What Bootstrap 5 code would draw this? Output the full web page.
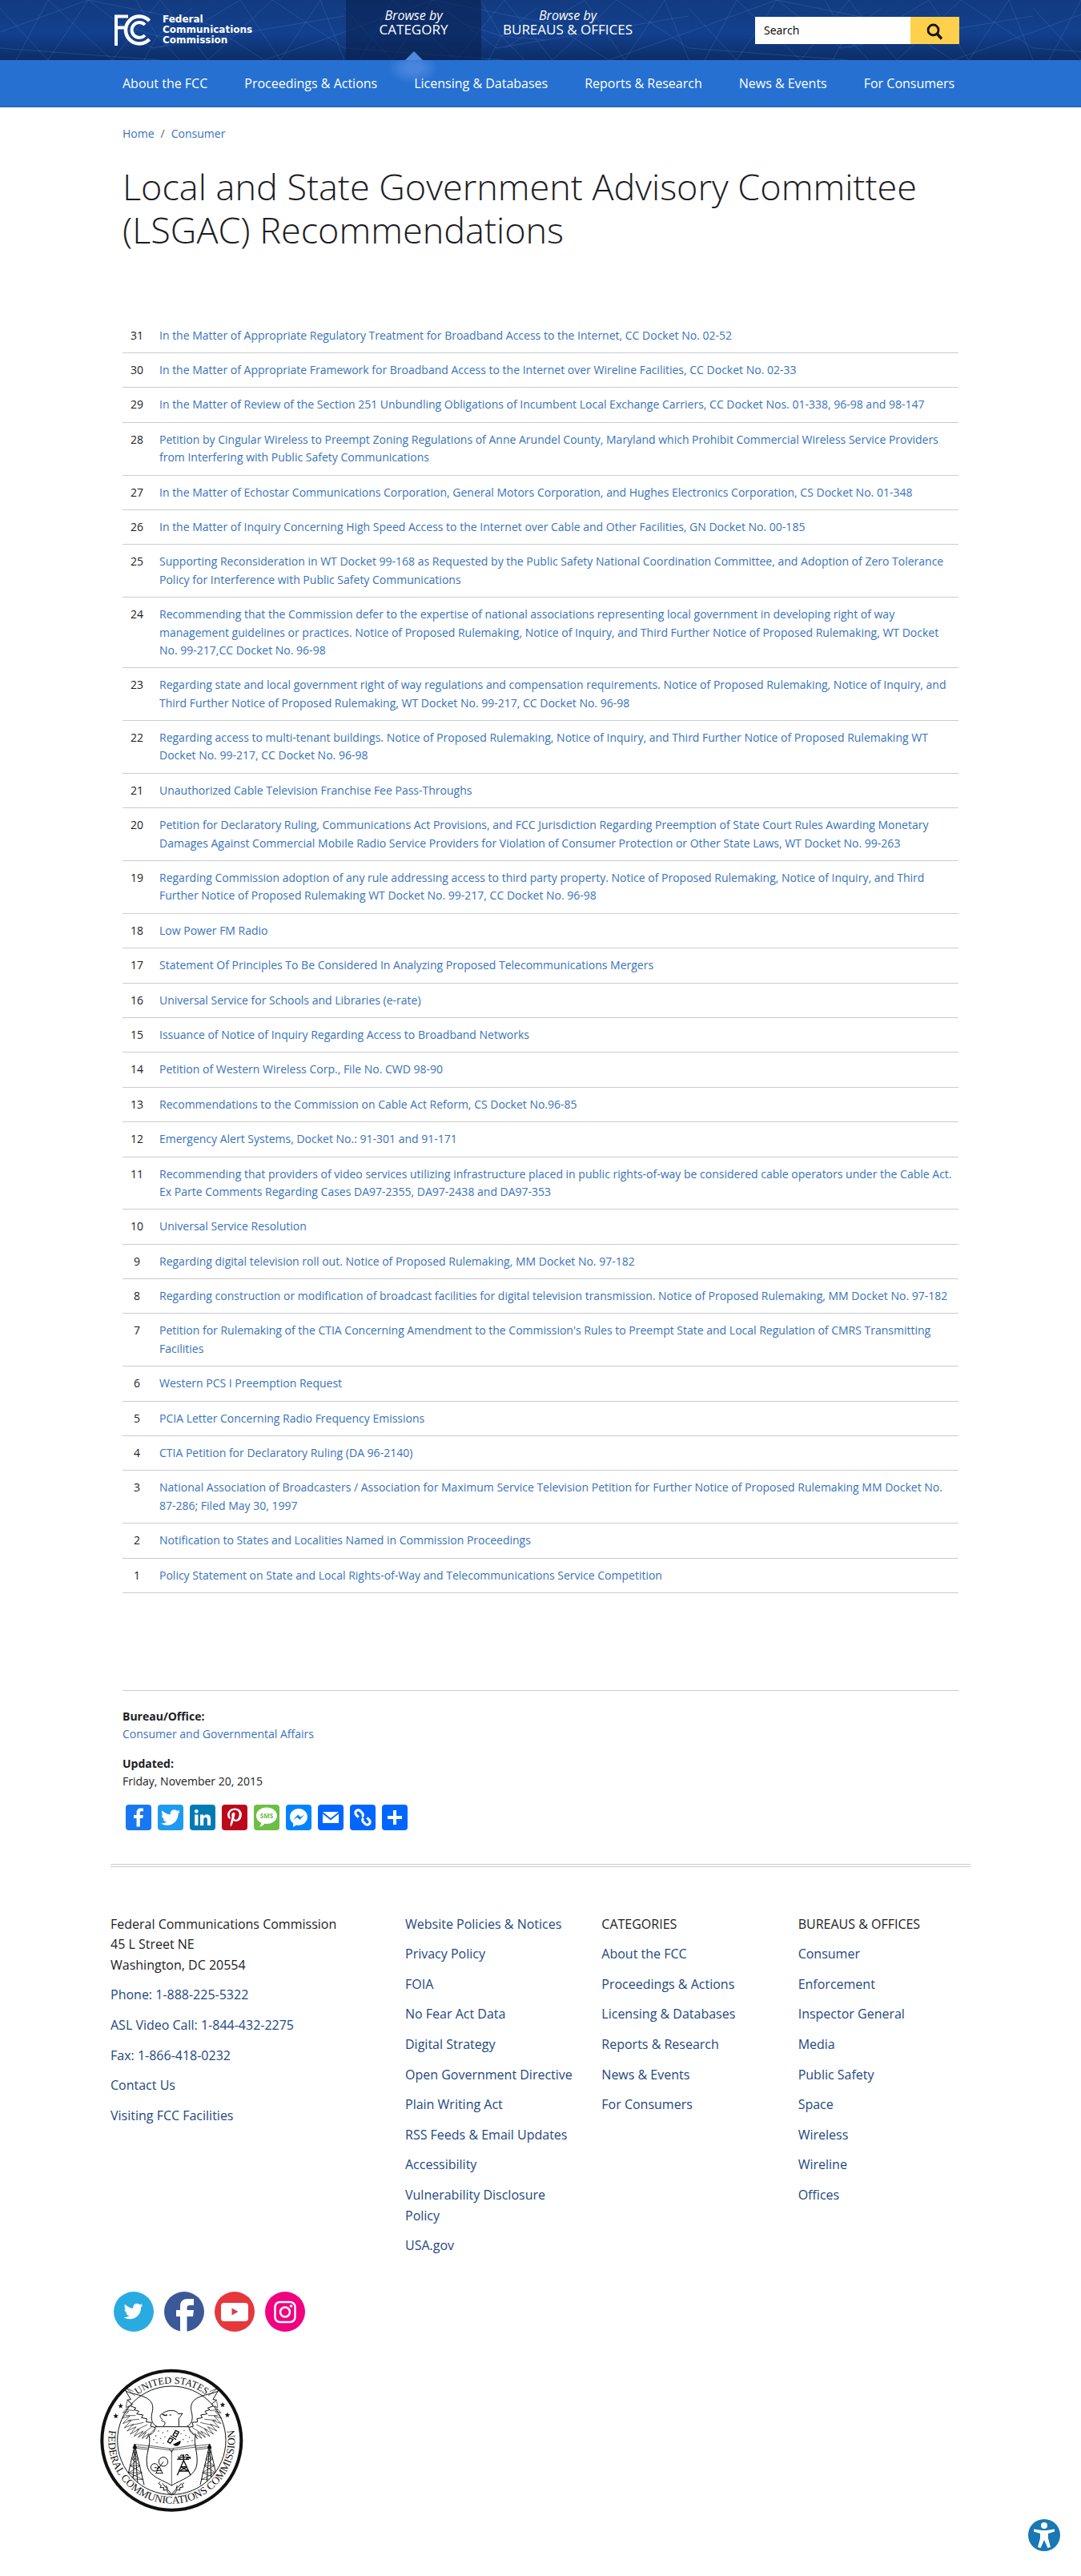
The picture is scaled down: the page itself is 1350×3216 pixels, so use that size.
<!DOCTYPE html>
<html lang="en">
<head>
<meta charset="utf-8">
<meta name="viewport" content="width=device-width, initial-scale=1">
<title>Local and State Government Advisory Committee (LSGAC) Recommendations | Federal Communications Commission</title>
<link href="https://cdn.jsdelivr.net/npm/bootstrap@5.3.0/dist/css/bootstrap.min.css" rel="stylesheet">
<style>
body{font-family:"Open Sans",sans-serif;font-size:16px;line-height:1.6;color:#1c1c24;background:#fff}
a{color:#3873ba;text-decoration:none}
a:hover{text-decoration:underline}
.wrap{max-width:1104px;padding-left:15px;padding-right:15px}
.wrap-in{padding-left:30px;padding-right:30px}
.fs-text{font-size:14px}

.masthead{background:linear-gradient(#123b80,#13408d 55%,#0d2d66);overflow:hidden}
.masthead .net{position:absolute;inset:0;width:100%;height:100%}
.masthead .wrap{min-height:75px}
.logo{width:294px;padding-left:5px;color:#fff}
.logo:hover{text-decoration:none}
.logo-name{font:bold 12px/13px "DejaVu Sans",sans-serif;margin-left:14px}
.browse{border:0;background:none;color:#fff;padding:11px 27px 0;line-height:17px;font-size:17px;text-align:center}
.browse i{display:block;font-size:16px}
.browse.on{width:169px;padding-left:0;padding-right:0;background:rgba(10,33,80,.6);position:relative}
.browse.on::after{content:"";position:absolute;left:50%;bottom:0;margin-left:-11px;border:11px solid transparent;border-top:0;border-bottom-color:#5089de}
.search{width:255px;margin-right:14px}
.search .form-control{height:34px;border:0;border-radius:0;font-size:14px;padding:0 11px;color:#000}
.search .form-control::placeholder{color:#000;opacity:1}
.search .btn{width:61px;flex:none;border:0;border-radius:0;background:#ffd04b;padding:0}

.mainnav{background:radial-gradient(ellipse 32px 20px at 516px 10px,#4785de 30%,rgba(71,133,222,0)) #2670d2;border-bottom:2px solid #2865bd}
.mainnav .nav{gap:0 46px;padding-top:17px;padding-bottom:14px}
.mainnav a{color:#fff;padding:0}

.crumbs{padding-top:21px}
.crumbs .breadcrumb{--bs-breadcrumb-item-padding-x:8px;line-height:24px}
h1{font-size:45px;font-weight:300;line-height:54px;margin:27px 0 84px}
.recs{--bs-table-bg:transparent;font-size:14px;margin-bottom:121px;color:inherit}
.recs td{padding:10px 3px 10px 10px;border-bottom:1px solid #ccc;color:inherit}
.recs td:first-child{width:36px;padding-left:0;padding-right:0;text-align:center}
.meta{border-top:1px solid #ccc;padding-top:21px}
.share{gap:8px;padding:17px 4px 42px}
.share a,.follow a,.share svg,.follow svg{display:block}
.share svg{width:32px;height:32px;border-radius:4px}
.updated{margin-top:14px}
.twin{border-top:1px solid #ccc;border-bottom:1px solid #ccc;height:4px;opacity:1;margin:0 0 59px;background:none;color:inherit}
footer a{color:#1d4880}
footer li{margin-bottom:12px}
.follow{gap:13px;padding:32px 4px 0}
.seal{display:block;width:182px;height:182px;margin:44px 0 79px -14px}
.a11y{position:fixed;right:26px;bottom:31px;width:40px;height:40px;border:0;padding:0;background:none}
.a11y svg{display:block}
</style>
</head>
<body>

<header class="masthead position-relative">
  <svg class="net" aria-hidden="true">
    <defs>
      <pattern id="mesh" width="430" height="75" patternUnits="userSpaceOnUse">
        <g stroke="#5f93d8" stroke-opacity=".22" fill="none" stroke-width="1">
          <path d="M0 10 60 75M0 40 110 0M20 75 60 0M60 0 140 75M60 75 110 0M110 0 190 60M140 75 200 0M110 0 260 30M200 0 260 75M200 60 300 0M190 60 430 20M260 30 330 75M260 75 340 0M300 0 350 75M340 0 430 60M350 75 400 0M400 0 430 75M0 60 200 75M330 75 430 40"/>
          <path d="M196 45 170 0M196 45 150 30M196 45 225 75M196 45 250 50M196 45 240 10M196 45 180 75"/>
        </g>
      </pattern>
    </defs>
    <rect width="100%" height="100%" fill="url(#mesh)"/>
  </svg>
  <div class="container-fluid wrap d-flex position-relative">
    <a class="logo d-flex align-items-center" href="#">
      <svg width="46" height="39" viewBox="0 0 46 39" fill="none" stroke="#fff" aria-hidden="true">
        <path d="M2 39V2.500H17M2 16.500H12" stroke-width="4"/>
        <path d="M43.500 8A17 17 0 1 0 43.500 31" stroke-width="4.500"/>
        <path d="M38 13A9.500 9.500 0 1 0 38 26" stroke-width="4"/>
      </svg>
      <span class="logo-name">Federal<br>Communications<br>Commission</span>
    </a>
    <button class="browse on d-flex flex-column align-items-center" type="button"><i>Browse by</i>CATEGORY</button>
    <button class="browse d-flex flex-column align-items-center" type="button"><i>Browse by</i>BUREAUS &amp; OFFICES</button>
    <form class="search input-group flex-nowrap align-self-center ms-auto" role="search" onsubmit="return false">
      <input class="form-control" type="search" placeholder="Search" aria-label="Search">
      <button class="btn" type="submit" aria-label="Submit search">
        <svg width="21" height="21" viewBox="0 0 21 21" fill="none" stroke="#141414" aria-hidden="true"><circle cx="8.500" cy="8.500" r="6.500" stroke-width="2.800"/><path d="m13 13 6 6.500" stroke-width="3.400"/></svg>
      </button>
    </form>
  </div>
</header>

<nav class="mainnav" aria-label="Main">
  <div class="container-fluid wrap wrap-in">
    <div class="nav">
      <a class="nav-link" href="#">About the FCC</a>
      <a class="nav-link" href="#">Proceedings &amp; Actions</a>
      <a class="nav-link" href="#">Licensing &amp; Databases</a>
      <a class="nav-link" href="#">Reports &amp; Research</a>
      <a class="nav-link" href="#">News &amp; Events</a>
      <a class="nav-link" href="#">For Consumers</a>
    </div>
  </div>
</nav>

<main class="container-fluid wrap wrap-in">
  <nav class="crumbs" aria-label="Breadcrumb">
    <ol class="breadcrumb fs-text mb-0">
      <li class="breadcrumb-item"><a href="#">Home</a></li>
      <li class="breadcrumb-item"><a href="#">Consumer</a></li>
    </ol>
  </nav>
  <h1>Local and State Government Advisory Committee (LSGAC) Recommendations</h1>

  <table class="table recs">
    <tbody>
      <tr><td>31</td><td><a href="#">In the Matter of Appropriate Regulatory Treatment for Broadband Access to the Internet, CC Docket No. 02-52</a></td></tr>
      <tr><td>30</td><td><a href="#">In the Matter of Appropriate Framework for Broadband Access to the Internet over Wireline Facilities, CC Docket No. 02-33</a></td></tr>
      <tr><td>29</td><td><a href="#">In the Matter of Review of the Section 251 Unbundling Obligations of Incumbent Local Exchange Carriers, CC Docket Nos. 01-338, 96-98 and 98-147</a></td></tr>
      <tr><td>28</td><td><a href="#">Petition by Cingular Wireless to Preempt Zoning Regulations of Anne Arundel County, Maryland which Prohibit Commercial Wireless Service Providers from Interfering with Public Safety Communications</a></td></tr>
      <tr><td>27</td><td><a href="#">In the Matter of Echostar Communications Corporation, General Motors Corporation, and Hughes Electronics Corporation, CS Docket No. 01-348</a></td></tr>
      <tr><td>26</td><td><a href="#">In the Matter of Inquiry Concerning High Speed Access to the Internet over Cable and Other Facilities, GN Docket No. 00-185</a></td></tr>
      <tr><td>25</td><td><a href="#">Supporting Reconsideration in WT Docket 99-168 as Requested by the Public Safety National Coordination Committee, and Adoption of Zero Tolerance Policy for Interference with Public Safety Communications</a></td></tr>
      <tr><td>24</td><td><a href="#">Recommending that the Commission defer to the expertise of national associations representing local government in developing right of way management guidelines or practices. Notice of Proposed Rulemaking, Notice of Inquiry, and Third Further Notice of Proposed Rulemaking, WT Docket No. 99-217,CC Docket No. 96-98</a></td></tr>
      <tr><td>23</td><td><a href="#">Regarding state and local government right of way regulations and compensation requirements. Notice of Proposed Rulemaking, Notice of Inquiry, and Third Further Notice of Proposed Rulemaking, WT Docket No. 99-217, CC Docket No. 96-98</a></td></tr>
      <tr><td>22</td><td><a href="#">Regarding access to multi-tenant buildings. Notice of Proposed Rulemaking, Notice of Inquiry, and Third Further Notice of Proposed Rulemaking WT Docket No. 99-217, CC Docket No. 96-98</a></td></tr>
      <tr><td>21</td><td><a href="#">Unauthorized Cable Television Franchise Fee Pass-Throughs</a></td></tr>
      <tr><td>20</td><td><a href="#">Petition for Declaratory Ruling, Communications Act Provisions, and FCC Jurisdiction Regarding Preemption of State Court Rules Awarding Monetary Damages Against Commercial Mobile Radio Service Providers for Violation of Consumer Protection or Other State Laws, WT Docket No. 99-263</a></td></tr>
      <tr><td>19</td><td><a href="#">Regarding Commission adoption of any rule addressing access to third party property. Notice of Proposed Rulemaking, Notice of Inquiry, and Third Further Notice of Proposed Rulemaking WT Docket No. 99-217, CC Docket No. 96-98</a></td></tr>
      <tr><td>18</td><td><a href="#">Low Power FM Radio</a></td></tr>
      <tr><td>17</td><td><a href="#">Statement Of Principles To Be Considered In Analyzing Proposed Telecommunications Mergers</a></td></tr>
      <tr><td>16</td><td><a href="#">Universal Service for Schools and Libraries (e-rate)</a></td></tr>
      <tr><td>15</td><td><a href="#">Issuance of Notice of Inquiry Regarding Access to Broadband Networks</a></td></tr>
      <tr><td>14</td><td><a href="#">Petition of Western Wireless Corp., File No. CWD 98-90</a></td></tr>
      <tr><td>13</td><td><a href="#">Recommendations to the Commission on Cable Act Reform, CS Docket No.96-85</a></td></tr>
      <tr><td>12</td><td><a href="#">Emergency Alert Systems, Docket No.: 91-301 and 91-171</a></td></tr>
      <tr><td>11</td><td><a href="#">Recommending that providers of video services utilizing infrastructure placed in public rights-of-way be considered cable operators under the Cable Act. Ex Parte Comments Regarding Cases DA97-2355, DA97-2438 and DA97-353</a></td></tr>
      <tr><td>10</td><td><a href="#">Universal Service Resolution</a></td></tr>
      <tr><td>9</td><td><a href="#">Regarding digital television roll out. Notice of Proposed Rulemaking, MM Docket No. 97-182</a></td></tr>
      <tr><td>8</td><td><a href="#">Regarding construction or modification of broadcast facilities for digital television transmission. Notice of Proposed Rulemaking, MM Docket No. 97-182</a></td></tr>
      <tr><td>7</td><td><a href="#">Petition for Rulemaking of the CTIA Concerning Amendment to the Commission's Rules to Preempt State and Local Regulation of CMRS Transmitting Facilities</a></td></tr>
      <tr><td>6</td><td><a href="#">Western PCS I Preemption Request</a></td></tr>
      <tr><td>5</td><td><a href="#">PCIA Letter Concerning Radio Frequency Emissions</a></td></tr>
      <tr><td>4</td><td><a href="#">CTIA Petition for Declaratory Ruling (DA 96-2140)</a></td></tr>
      <tr><td>3</td><td><a href="#">National Association of Broadcasters / Association for Maximum Service Television Petition for Further Notice of Proposed Rulemaking MM Docket No. 87-286; Filed May 30, 1997</a></td></tr>
      <tr><td>2</td><td><a href="#">Notification to States and Localities Named in Commission Proceedings</a></td></tr>
      <tr><td>1</td><td><a href="#">Policy Statement on State and Local Rights-of-Way and Telecommunications Service Competition</a></td></tr>
    </tbody>
  </table>

  <section class="meta fs-text">
    <div><b>Bureau/Office:</b></div>
    <div><a href="#">Consumer and Governmental Affairs</a></div>
    <div class="updated"><b>Updated:</b></div>
    <div>Friday, November 20, 2015</div>
    <div class="share d-flex flex-wrap">
      <a href="#" aria-label="Facebook"><svg viewBox="0 0 32 32" fill="#fff"><path fill="#1877f2" d="M0 0h32v32H0z"/><path d="M17.780 27.500V17.008h3.522l.527-4.090h-4.050v-2.610c0-1.182.330-1.990 2.023-1.990h2.166V4.660c-.375-.050-1.660-.160-3.155-.160-3.123 0-5.260 1.905-5.260 5.405v3.016h-3.530v4.090h3.530V27.500h4.223z"/></svg></a>
      <a href="#" aria-label="Twitter"><svg viewBox="0 0 32 32" fill="#fff"><path fill="#1d9bf0" d="M0 0h32v32H0z"/><path d="M28 8.557a9.913 9.913 0 0 1-2.828.775 4.930 4.930 0 0 0 2.166-2.725 9.738 9.738 0 0 1-3.130 1.194 4.920 4.920 0 0 0-3.593-1.550 4.924 4.924 0 0 0-4.794 6.049c-4.090-.210-7.720-2.170-10.150-5.150a4.942 4.942 0 0 0-.665 2.477c0 1.710.870 3.214 2.190 4.100a4.968 4.968 0 0 1-2.230-.616v.060c0 2.390 1.700 4.380 3.952 4.830-.414.115-.850.174-1.297.174-.318 0-.626-.030-.928-.086a4.935 4.935 0 0 0 4.600 3.420 9.893 9.893 0 0 1-6.114 2.107c-.398 0-.790-.023-1.175-.068a13.953 13.953 0 0 0 7.550 2.213c9.056 0 14.010-7.507 14.010-14.013 0-.213-.005-.426-.015-.637.960-.695 1.795-1.560 2.455-2.550z"/></svg></a>
      <a href="#" aria-label="LinkedIn"><svg viewBox="0 0 32 32" fill="#fff"><path fill="#007bb5" d="M0 0h32v32H0z"/><path d="M6.227 12.610h4.190v13.480h-4.190V12.610zm2.095-6.700a2.430 2.430 0 0 1 0 4.860c-1.344 0-2.428-1.090-2.428-2.430s1.084-2.430 2.428-2.430m4.720 6.700h4.020v1.840h.058c.560-1.058 1.927-2.176 3.965-2.176 4.238 0 5.020 2.792 5.020 6.420v7.395h-4.183v-6.560c0-1.564-.030-3.574-2.178-3.574-2.180 0-2.514 1.700-2.514 3.460v6.668h-4.187V12.610z"/></svg></a>
      <a href="#" aria-label="Pinterest"><svg viewBox="0 0 32 32" fill="#fff"><path fill="#bd081c" d="M0 0h32v32H0z"/><path d="M16.539 4.500c-6.277 0-9.442 4.500-9.442 8.253 0 2.272.860 4.293 2.705 5.046.303.125.574.005.662-.330.061-.231.205-.816.270-1.060.088-.331.053-.447-.191-.736-.532-.627-.873-1.439-.873-2.591 0-3.338 2.498-6.327 6.505-6.327 3.548 0 5.497 2.168 5.497 5.062 0 3.810-1.686 7.025-4.188 7.025-1.382 0-2.416-1.142-2.085-2.545.397-1.674 1.166-3.480 1.166-4.689 0-1.081-.581-1.983-1.782-1.983-1.413 0-2.548 1.462-2.548 3.419 0 1.247.421 2.091.421 2.091l-1.699 7.199c-.505 2.137-.076 4.755-.039 5.019.021.158.223.196.314.077.130-.170 1.813-2.247 2.384-4.324.162-.587.929-3.631.929-3.631.460.876 1.801 1.646 3.227 1.646 4.247 0 7.128-3.871 7.128-9.053.003-3.918-3.317-7.568-8.361-7.568z"/></svg></a>
      <a href="#" aria-label="Message"><svg viewBox="0 0 32 32"><path fill="#6cbe45" d="M0 0h32v32H0z"/><path fill="#fff" d="M16 3.500c7.200 0 13 4.600 13 10.300S23.200 24 16 24c-.900 0-1.800 0-2.600-.200-1.700 2.300-4 3.700-6.400 4 1.300-1.500 2-3.300 2-5.200-3.600-1.800-6-5-6-8.800C3 8.100 8.800 3.500 16 3.500z"/><text x="16" y="17" text-anchor="middle" font-family="Open Sans, sans-serif" font-size="8" font-weight="700" fill="#6cbe45">SMS</text></svg></a>
      <a href="#" aria-label="Messenger"><svg viewBox="0 0 32 32"><path fill="#0084ff" d="M0 0h32v32H0z"/><path fill="#fff" d="M16 5C9.900 5 5 9.500 5 15.300c0 3.300 1.600 6.100 4.100 8V28l4-2.600c.900.200 1.900.300 2.900.300 6.100 0 11-4.600 11-10.400S22.100 5 16 5z"/><path fill="#0084ff" d="m9 19 6.200-6.500 3 3 5-3L17.300 19l-3-3z"/></svg></a>
      <a href="#" aria-label="Email"><svg viewBox="0 0 32 32"><path fill="#0166ff" d="M0 0h32v32H0z"/><path fill="#fff" d="M6 9h20L16 17z"/><path fill="#fff" d="M6 11.500 16 19.500l10-8V23H6z"/></svg></a>
      <a href="#" aria-label="Copy link"><svg viewBox="0 0 32 32"><path fill="#0166ff" d="M0 0h32v32H0z"/><g transform="rotate(45 16 16)" fill="none" stroke="#fff" stroke-width="3"><path d="M12 19.500H8a3.500 3.500 0 0 1-3.500-3.500A3.500 3.500 0 0 1 8 12.500h3.500a3.500 3.500 0 0 1 3.500 3.500M20 12.500h4a3.500 3.500 0 0 1 0 7h-3.500a3.500 3.500 0 0 1-3.500-3.500"/></g></svg></a>
      <a href="#" aria-label="Share"><svg viewBox="0 0 32 32"><path fill="#0166ff" d="M0 0h32v32H0z"/><path fill="#fff" d="M14 7h4v18h-4z"/><path fill="#fff" d="M7 14h18v4H7z"/></svg></a>
    </div>
  </section>
</main>

<footer class="container-fluid wrap">
  <hr class="twin">
  <div class="row" style="--bs-gutter-x:30px">
    <div class="col-md-4">
      <ul class="list-unstyled mb-0">
        <li>Federal Communications Commission<br>45 L Street NE<br>Washington, DC 20554</li>
        <li><a href="#">Phone: 1-888-225-5322</a></li>
        <li><a href="#">ASL Video Call: 1-844-432-2275</a></li>
        <li><a href="#">Fax: 1-866-418-0232</a></li>
        <li><a href="#">Contact Us</a></li>
        <li><a href="#">Visiting FCC Facilities</a></li>
      </ul>
    </div>
    <div class="col-md">
      <ul class="list-unstyled mb-0">
        <li><a href="#">Website Policies &amp; Notices</a></li>
        <li><a href="#">Privacy Policy</a></li>
        <li><a href="#">FOIA</a></li>
        <li><a href="#">No Fear Act Data</a></li>
        <li><a href="#">Digital Strategy</a></li>
        <li><a href="#">Open Government Directive</a></li>
        <li><a href="#">Plain Writing Act</a></li>
        <li><a href="#">RSS Feeds &amp; Email Updates</a></li>
        <li><a href="#">Accessibility</a></li>
        <li><a href="#">Vulnerability Disclosure Policy</a></li>
        <li><a href="#">USA.gov</a></li>
      </ul>
    </div>
    <div class="col-md">
      <ul class="list-unstyled mb-0">
        <li>CATEGORIES</li>
        <li><a href="#">About the FCC</a></li>
        <li><a href="#">Proceedings &amp; Actions</a></li>
        <li><a href="#">Licensing &amp; Databases</a></li>
        <li><a href="#">Reports &amp; Research</a></li>
        <li><a href="#">News &amp; Events</a></li>
        <li><a href="#">For Consumers</a></li>
      </ul>
    </div>
    <div class="col-md">
      <ul class="list-unstyled mb-0">
        <li>BUREAUS &amp; OFFICES</li>
        <li><a href="#">Consumer</a></li>
        <li><a href="#">Enforcement</a></li>
        <li><a href="#">Inspector General</a></li>
        <li><a href="#">Media</a></li>
        <li><a href="#">Public Safety</a></li>
        <li><a href="#">Space</a></li>
        <li><a href="#">Wireless</a></li>
        <li><a href="#">Wireline</a></li>
        <li><a href="#">Offices</a></li>
      </ul>
    </div>
  </div>

  <div class="follow d-flex flex-wrap">
    <a href="#" aria-label="Twitter"><svg width="50" height="50" viewBox="0 0 50 50"><circle cx="25" cy="25" r="25" fill="#29abe2"/><path fill="#fff" transform="translate(8.500 8.500)" d="M28 8.557a9.913 9.913 0 0 1-2.828.775 4.930 4.930 0 0 0 2.166-2.725 9.738 9.738 0 0 1-3.130 1.194 4.920 4.920 0 0 0-3.593-1.550 4.924 4.924 0 0 0-4.794 6.049c-4.090-.210-7.720-2.170-10.150-5.150a4.942 4.942 0 0 0-.665 2.477c0 1.710.870 3.214 2.190 4.100a4.968 4.968 0 0 1-2.230-.616v.060c0 2.390 1.700 4.380 3.952 4.830-.414.115-.850.174-1.297.174-.318 0-.626-.030-.928-.086a4.935 4.935 0 0 0 4.600 3.420 9.893 9.893 0 0 1-6.114 2.107c-.398 0-.790-.023-1.175-.068a13.953 13.953 0 0 0 7.550 2.213c9.056 0 14.010-7.507 14.010-14.013 0-.213-.005-.426-.015-.637.960-.695 1.795-1.560 2.455-2.550z"/></svg></a>
    <a href="#" aria-label="Facebook"><svg width="50" height="50" viewBox="0 0 50 50"><circle cx="25" cy="25" r="25" fill="#3b5998"/><path fill="#fff" d="M20 50V31h-5v-8h5v-5c0-6 4-9 9-9h8v8h-5c-2.500 0-3.500 1-3.500 3v3H37l-1 8h-7.500v19z"/></svg></a>
    <a href="#" aria-label="YouTube"><svg width="50" height="50" viewBox="0 0 50 50"><circle cx="25" cy="25" r="25" fill="#e6373b"/><rect x="8" y="14" width="34" height="23" rx="4" fill="#fff"/><path fill="#d1414a" d="M21.500 20.500v9l8-4.500z"/></svg></a>
    <a href="#" aria-label="Instagram"><svg width="50" height="50" viewBox="0 0 50 50"><circle cx="25" cy="25" r="25" fill="#f10080"/><g fill="none" stroke="#fff" stroke-width="2.500"><rect x="12.500" y="13" width="25" height="25" rx="6"/><circle cx="25" cy="25.500" r="6"/></g><circle cx="32.500" cy="18" r="1.800" fill="#fff"/></svg></a>
  </div>

  <svg class="seal" viewBox="0 0 546 546" role="img" aria-label="Seal of the Federal Communications Commission" fill="none" stroke="#111" stroke-width="3">
    <defs>
      <clipPath id="disc"><circle cx="271" cy="275" r="203"/></clipPath>
      <path id="arcTop" d="M58 275A213 213 0 0 1 484 275"/>
      <path id="arcLow" d="M61 165A237 237 0 1 0 481 165"/>
      <polygon id="star" points="0,-10 3,-3 10,-3 4,2 6,9 0,5 -6,9 -4,2 -10,-3 -3,-3"/>
      <g id="halfWing">
        <path d="M98 88C110 100 140 100 168 112C200 126 205 145 197 175C192 200 200 215 216 223"/>
        <path d="M98 88 118 122 104 124 124 140 116 146 138 154 130 160 148 166 140 176 164 180 158 190 178 194 176 206 196 208 192 222 214 228"/>
        <path stroke-width="2" d="M104 128 100 152 112 146 88 172 110 166 86 192 114 184 88 212 120 200 94 228 128 214 104 240 138 224 116 252 150 232 130 260 164 240 146 264 176 244 160 268 186 250 176 270 194 246 216 224"/>
        <path stroke-width="2" d="M100 160 130 164M100 182 136 182M106 200 150 196M122 218 166 208M140 236 180 216M160 250 196 226"/>
      </g>
      <g id="tower" stroke-width="3">
        <path d="M133 292 104 420M133 292 168 442M133 292 126 430M133 292 144 440"/>
        <path stroke-width="2" d="M127 320 140 320M122 345 147 345M116 370 153 370M110 396 160 396M106 418 165 422M127 320 147 345 116 370 160 396 106 418M140 320 122 345 153 370 110 396 165 422"/>
        <path d="M126 304 133 288 140 304z" fill="#111"/>
      </g>
    </defs>
    <circle cx="271" cy="275" r="261" stroke-width="12"/>
    <circle cx="271" cy="275" r="203"/>
    <path d="M134 108 98 78 128 92M408 108 446 78 414 92" stroke-width="2"/>
    <use href="#halfWing"/><use href="#halfWing" transform="matrix(-1 0 0 1 544 0)"/>
    <g clip-path="url(#disc)"><use href="#tower"/><use href="#tower" transform="matrix(-1 0 0 1 546 0)"/></g>
    <path d="M133 290 271 306 413 290M133 298 271 314 413 298M133 304 271 320 413 304" stroke-width="2"/>
    <path fill="#fff" d="M210 224H336C336 240 348 252 360 256C352 290 370 320 366 360C362 410 310 420 271 444C232 420 180 410 178 360C174 320 196 290 186 256C200 250 210 240 210 224z"/>
    <path d="M184 294 268 306 362 292M183 300 268 312 363 300M262 306 271 320 278 306M271 312V444" stroke-width="2"/>
    <path d="M240 222C248 214 248 205 240 204C234 203 230 200 236 196M236 196 230 190C226 184 228 176 236 176C250 160 290 158 296 176L312 174C306 182 302 190 298 192V222M262 180h8"/>
    <path d="M236 176C242 182 250 184 254 178" stroke-width="4"/>
    <g fill="#111" stroke="none">
      <circle cx="222" cy="240" r="2"/><circle cx="238" cy="246" r="2"/><circle cx="212" cy="258" r="2"/><circle cx="230" cy="268" r="2"/><circle cx="204" cy="272" r="2"/><circle cx="246" cy="262" r="2"/><circle cx="256" cy="240" r="2"/><circle cx="318" cy="238" r="2"/><circle cx="324" cy="256" r="2"/><circle cx="338" cy="264" r="2"/><circle cx="314" cy="272" r="2"/><circle cx="332" cy="280" r="2"/><circle cx="216" cy="284" r="2"/><circle cx="240" cy="286" r="2"/><circle cx="348" cy="276" r="2"/><circle cx="306" cy="250" r="2"/>
      <path d="M276 290A16 16 0 0 0 304 276z"/>
    </g>
    <path d="M286 238 298 244 288 262 276 256zM256 280 266 286 276 272 264 266zM266 258 288 272M282 246 294 252" stroke-width="4"/>
    <g><circle cx="207" cy="376" r="14"/><circle cx="240" cy="355" r="17"/><path d="M212 400 224 372 238 400M216 388h18M213 398h24M207 376 222 380 240 355"/></g>
    <path d="M292 406 316 350 342 406M300 390h34M306 374h22M300 390 328 374M334 390 306 374M316 350V328M294 338h48M298 346h38M292 348c4-6 12-6 14 0M326 346c4-8 12-8 16-2M304 334c2-6 8-6 10 0M322 332c4-6 10-4 12 2" stroke-width="4"/>
    <path d="M228 430 222 436 232 444 228 452 242 452 240 462 254 460 256 470 271 480 286 470 290 460 302 462 302 452 314 450 310 440 318 434M236 436 271 476 308 436M250 444 256 456M292 444 288 456"/>
    <g fill="#111" stroke="none">
      <use href="#star" x="80" y="146"/><use href="#star" x="62" y="184"/><use href="#star" x="462" y="142"/><use href="#star" x="480" y="180"/>
      <g font-family="Liberation Serif, serif" text-anchor="middle">
        <text font-size="37"><textPath href="#arcTop" startOffset="50%">UNITED STATES</textPath></text>
        <text font-size="40"><textPath href="#arcLow" startOffset="50%">FEDERAL COMMUNICATIONS COMMISSION</textPath></text>
      </g>
    </g>
  </svg>
</footer>

<button class="a11y" type="button" aria-label="Accessibility options">
  <svg width="40" height="40" viewBox="0 0 40 40"><circle cx="20" cy="20" r="20" fill="#1878b4"/><g fill="#fff"><circle cx="20" cy="8" r="4"/><path d="M7 12.500 17 14h6l10-1.500v3L25 18v6l3 11-3.500 1L20 26l-4.500 10-3.500-1 3-11v-6l-8-2.500z"/></g></svg>
</button>

<script src="https://cdn.jsdelivr.net/npm/bootstrap@5.3.0/dist/js/bootstrap.bundle.min.js"></script>
</body>
</html>
